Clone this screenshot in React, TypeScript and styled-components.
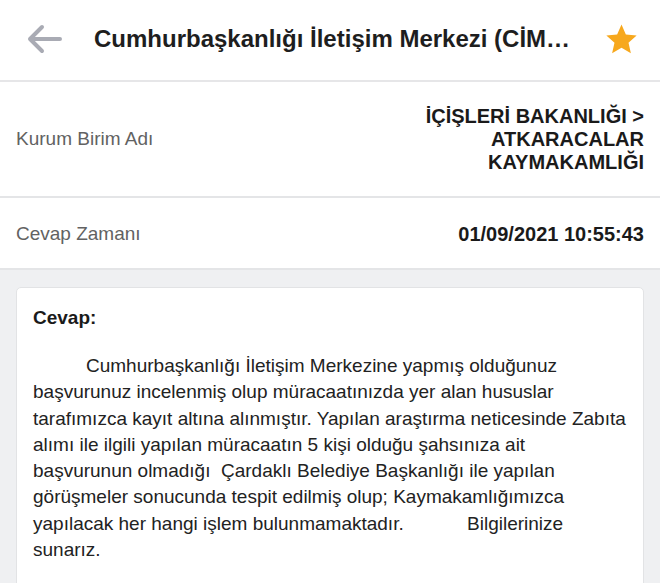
import styled, { createGlobalStyle } from 'styled-components'

const GlobalStyle = createGlobalStyle`
  html, body {
    margin: 0;
    padding: 0;
    background: #eff0f2;
  }
  body {
    font-family: "Liberation Sans", Arial, sans-serif;
    color: #1c1c1c;
  }
`

const Page = styled.div`
  width: 660px;
  height: 583px;
  overflow: hidden;
  background: #eff0f2;
`

const Header = styled.header`
  height: 82px;
  background: #fff;
  display: flex;
  align-items: center;
  padding: 0 23px 2px 26px;
  box-sizing: border-box;
  border-bottom: 2px solid #e6e6e8;
`

const IconButton = styled.button`
  border: 0;
  background: none;
  padding: 0;
  display: flex;
  align-items: center;
  justify-content: center;
  cursor: pointer;
`

const Title = styled.h1`
  width: 480px;
  margin: 0 auto 0 32px;
  font-size: 24px;
  font-weight: 700;
  color: #1e1e1e;
  white-space: nowrap;
  overflow: hidden;
  text-overflow: ellipsis;
`

const InfoRow = styled.div<{ $tall?: boolean }>`
  background: #fff;
  display: flex;
  justify-content: space-between;
  align-items: center;
  padding: ${({ $tall }) => ($tall ? '0 16px' : '2px 16px 0')};
  height: ${({ $tall }) => ($tall ? '116px' : '72px')};
  box-sizing: border-box;
  border-bottom: 2px solid #e4e5e7;
`

const Label = styled.span`
  font-size: 19px;
  color: #626262;
`

const Value = styled.span`
  font-size: 20px;
  font-weight: 700;
  color: #1a1a1a;
  text-align: right;
  line-height: 23px;
`

const Body = styled.div`
  padding: 17px 16px 0;
`

const Card = styled.section`
  background: #fff;
  border: 1px solid #e2e3e5;
  border-radius: 5px;
  padding: 19px 16px 60px;
`

const CardTitle = styled.h2`
  margin: 0 0 24px;
  font-size: 19px;
  line-height: 22px;
  font-weight: 700;
  color: #1a1a1a;
`

const Answer = styled.p`
  margin: 0;
  font-size: 19px;
  line-height: 26.3px;
  color: #222;
  white-space: pre-wrap;
  text-indent: 53px;
`

const answerText =
  'Cumhurbaşkanlığı İletişim Merkezine yapmış olduğunuz başvurunuz incelenmiş olup müracaatınızda yer alan hususlar tarafımızca kayıt altına alınmıştır. Yapılan araştırma neticesinde Zabıta alımı ile ilgili yapılan müracaatın 5 kişi olduğu şahsınıza ait başvurunun olmadığı  Çardaklı Belediye Başkanlığı ile yapılan görüşmeler sonucunda tespit edilmiş olup; Kaymakamlığımızca yapılacak her hangi işlem bulunmamaktadır.            Bilgilerinize sunarız.'

export default function App() {
  return (
    <Page>
      <GlobalStyle />
      <Header>
        <IconButton aria-label="Geri">
          <svg width="36" height="30" viewBox="0 0 36 30">
            <path
              d="M34 15H4M16 3L4 15l12 12"
              fill="none"
              stroke="#a9abb4"
              strokeWidth="4"
              strokeLinecap="round"
              strokeLinejoin="round"
            />
          </svg>
        </IconButton>
        <Title>Cumhurbaşkanlığı İletişim Merkezi (CİMER)</Title>
        <IconButton aria-label="Favori">
          <svg width="31" height="30" viewBox="1 0.6 22 21.4">
            <path
              d="M12 1l3.1 7.1 7.7.7-5.8 5.1 1.7 7.6L12 17.5l-6.7 4 1.7-7.6L1.2 8.8l7.7-.7z"
              fill="#f7a81d"
            />
          </svg>
        </IconButton>
      </Header>
      <InfoRow $tall>
        <Label>Kurum Birim Adı</Label>
        <Value>
          İÇİŞLERİ BAKANLIĞI &gt;
          <br />
          ATKARACALAR
          <br />
          KAYMAKAMLIĞI
        </Value>
      </InfoRow>
      <InfoRow>
        <Label>Cevap Zamanı</Label>
        <Value>01/09/2021 10:55:43</Value>
      </InfoRow>
      <Body>
        <Card>
          <CardTitle>Cevap:</CardTitle>
          <Answer>{answerText}</Answer>
        </Card>
      </Body>
    </Page>
  )
}
